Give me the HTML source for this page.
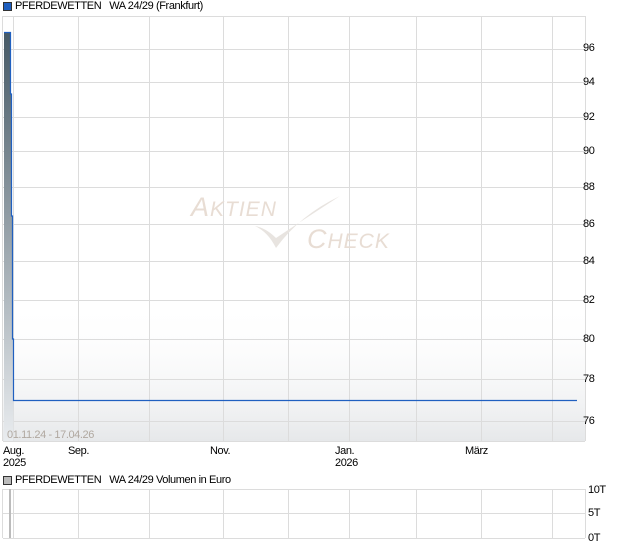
<!DOCTYPE html>
<html><head><style>
body{margin:0;width:620px;height:546px;background:#fff;font-family:"Liberation Sans",sans-serif;font-size:11px;color:#000;position:relative;overflow:hidden;letter-spacing:-0.4px}
.a{position:absolute}
</style></head><body>
<svg class="a" style="left:0;top:0" width="620" height="546">
<defs>
<linearGradient id="g" x1="0" y1="0" x2="0" y2="1"><stop offset="0" stop-color="#475a66"/><stop offset="1" stop-color="#e9ecef"/></linearGradient>
<linearGradient id="b" x1="0" y1="0" x2="0" y2="1"><stop offset="0" stop-color="#fff" stop-opacity="0"/><stop offset="1" stop-color="#e6e8ea"/></linearGradient>
</defs>
<rect x="3" y="300" width="582" height="141" fill="url(#b)"/>
<g stroke="#dcdcdc" stroke-width="1">
<line x1="3" y1="16.5" x2="585" y2="16.5"/>
<line x1="3" y1="49.5" x2="585" y2="49.5"/>
<line x1="3" y1="82.5" x2="585" y2="82.5"/>
<line x1="3" y1="117.5" x2="585" y2="117.5"/>
<line x1="3" y1="151.5" x2="585" y2="151.5"/>
<line x1="3" y1="187.5" x2="585" y2="187.5"/>
<line x1="3" y1="224.5" x2="585" y2="224.5"/>
<line x1="3" y1="261.5" x2="585" y2="261.5"/>
<line x1="3" y1="300.5" x2="585" y2="300.5"/>
<line x1="3" y1="339.5" x2="585" y2="339.5"/>
<line x1="3" y1="379.5" x2="585" y2="379.5"/>
<line x1="3" y1="421.5" x2="585" y2="421.5"/>
<line x1="3" y1="441.5" x2="585" y2="441.5"/>
<line x1="2.5" y1="16" x2="2.5" y2="441"/>
<line x1="585.5" y1="16" x2="585.5" y2="441"/>
<line x1="13.5" y1="16" x2="13.5" y2="441"/>
<line x1="78.5" y1="16" x2="78.5" y2="441"/>
<line x1="149.5" y1="16" x2="149.5" y2="441"/>
<line x1="223.5" y1="16" x2="223.5" y2="441"/>
<line x1="288.5" y1="16" x2="288.5" y2="441"/>
<line x1="349.5" y1="16" x2="349.5" y2="441"/>
<line x1="416.5" y1="16" x2="416.5" y2="441"/>
<line x1="481.5" y1="16" x2="481.5" y2="441"/>
<line x1="552.5" y1="16" x2="552.5" y2="441"/>
<line x1="3" y1="489.5" x2="585" y2="489.5"/>
<line x1="3" y1="513.5" x2="585" y2="513.5"/>
<line x1="3" y1="538.5" x2="585" y2="538.5"/>
<line x1="2.5" y1="489" x2="2.5" y2="538"/>
<line x1="585.5" y1="489" x2="585.5" y2="538"/>
<line x1="13.5" y1="489" x2="13.5" y2="538"/>
<line x1="78.5" y1="489" x2="78.5" y2="538"/>
<line x1="149.5" y1="489" x2="149.5" y2="538"/>
<line x1="223.5" y1="489" x2="223.5" y2="538"/>
<line x1="288.5" y1="489" x2="288.5" y2="538"/>
<line x1="349.5" y1="489" x2="349.5" y2="538"/>
<line x1="416.5" y1="489" x2="416.5" y2="538"/>
<line x1="481.5" y1="489" x2="481.5" y2="538"/>
<line x1="552.5" y1="489" x2="552.5" y2="538"/>
</g>
<rect x="9" y="489" width="2" height="49" fill="#bbb"/>
<path d="M4 32 H10.5 V94 H11.5 V216 H12.5 V339 H13.5 V400 V441 H4Z" fill="url(#g)"/>
<path d="M4 32.5 H10.5 V94 H11.5 V216 H12.5 V339 H13.5 V400.5 H577" fill="none" stroke="#2060c0" stroke-width="1.2"/>
<g font-family="Liberation Sans,sans-serif" font-style="italic" fill="#e8ddd4" font-size="27" letter-spacing="1">
<text x="191" y="216">A<tspan font-size="21">KTIEN</tspan></text>
<text x="307" y="248">C<tspan font-size="21">HECK</tspan></text>
</g>
<path d="M255 226 Q268 232 276 248 Q300 215 340 196 Q300 222 276 238 Q266 228 255 226Z" fill="#e8e4e0"/>
</svg>
<div class="a" style="left:3px;top:2px;width:7px;height:7px;background:#1f5fbf;border:1px solid #333"></div>
<div class="a" style="left:15px;top:0px">PFERDEWETTEN&nbsp;&nbsp; WA 24/29 (Frankfurt)</div>
<div class="a" style="left:3px;top:476px;width:7px;height:7px;background:#bbb;border:1px solid #333"></div>
<div class="a" style="left:15px;top:474px">PFERDEWETTEN&nbsp;&nbsp; WA 24/29 Volumen in Euro</div>
<div class="a" style="left:7px;top:429px;color:#b0a8a0">01.11.24 - 17.04.26</div>
<div class="a" style="left:583px;top:42px">96</div>
<div class="a" style="left:583px;top:76px">94</div>
<div class="a" style="left:583px;top:111px">92</div>
<div class="a" style="left:583px;top:145px">90</div>
<div class="a" style="left:583px;top:181px">88</div>
<div class="a" style="left:583px;top:218px">86</div>
<div class="a" style="left:583px;top:255px">84</div>
<div class="a" style="left:583px;top:294px">82</div>
<div class="a" style="left:583px;top:333px">80</div>
<div class="a" style="left:583px;top:373px">78</div>
<div class="a" style="left:583px;top:415px">76</div>
<div class="a" style="left:3px;top:445px">Aug.<br>2025</div>
<div class="a" style="left:68px;top:445px">Sep.</div>
<div class="a" style="left:210px;top:445px">Nov.</div>
<div class="a" style="left:335px;top:445px">Jan.<br>2026</div>
<div class="a" style="left:465px;top:445px">März</div>
<div class="a" style="left:588px;top:484px">10T</div>
<div class="a" style="left:588px;top:507px">5T</div>
<div class="a" style="left:588px;top:532px">0T</div>
</body></html>
